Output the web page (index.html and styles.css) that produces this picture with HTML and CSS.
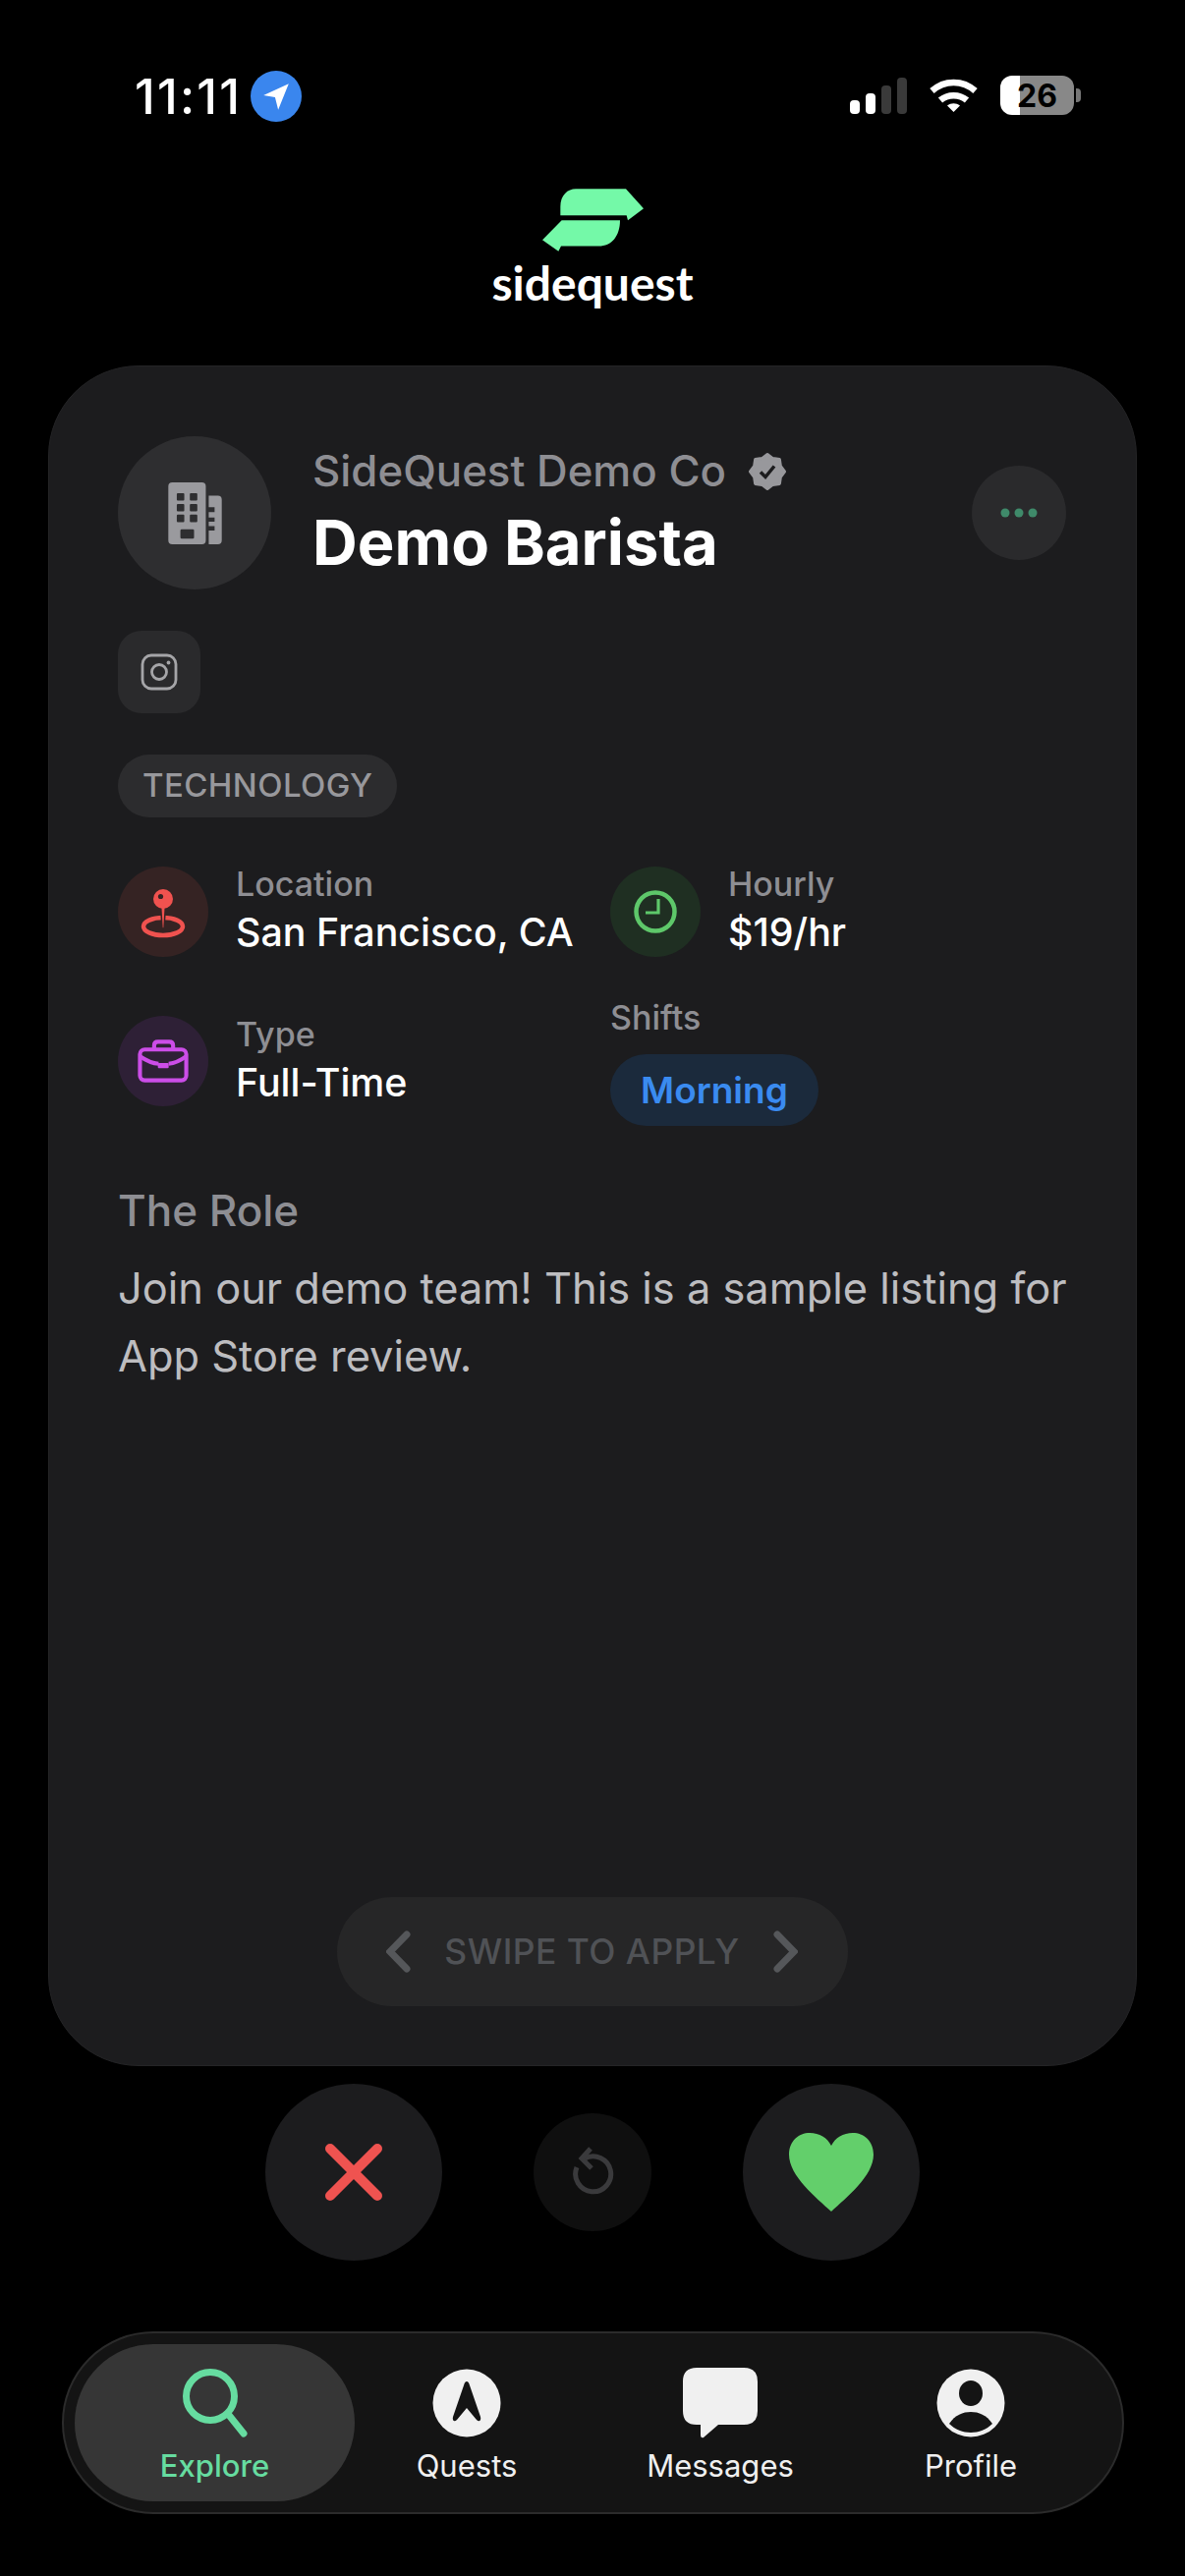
FILE: index.html
```html
<!DOCTYPE html>
<html>
<head>
  <meta charset="utf-8">
  <meta name="viewport" content="width=device-width, initial-scale=1">
  <title>SideQuest</title>
  <link rel="stylesheet" href="styles.css">
</head>
<body>
  <div class="status-bar">
    <div class="status-left">
      <span class="clock">11:11</span>
      <span class="location-dot">
        <svg width="32" height="32" viewBox="0 0 30 30"><path d="M27 3 L3 14 L14 16 L17 28 Z" fill="#fff"/></svg>
      </span>
    </div>
    <div class="status-right">
      <svg class="signal" width="58" height="37" viewBox="0 0 58 37">
        <rect x="0" y="23" width="10" height="14" rx="4" fill="#fff"/>
        <rect x="16" y="16" width="10" height="21" rx="4" fill="#fff"/>
        <rect x="32" y="8" width="10" height="29" rx="4" fill="#3a3a3a"/>
        <rect x="48" y="0" width="10" height="37" rx="4" fill="#3a3a3a"/>
      </svg>
      <svg class="wifi" width="49" height="37" viewBox="0 0 49 37" fill="none" stroke="#fff" stroke-width="6.5">
        <path d="M2.500 13.500 C15 2 34 2 46.500 13.500"/>
        <path d="M11 23 C18.500 16.500 30.500 16.500 38 23"/>
        <path d="M18 28.500 L24.500 35 L31 28.500 C27 25.500 22 25.500 18 28.500 Z" fill="#fff" stroke="none"/>
      </svg>
      <div class="battery"><span class="battery-level">26</span></div>
      <span class="battery-nub"></span>
    </div>
  </div>

  <div class="brand">
    <svg width="103" height="64" viewBox="213 66 309 191">
      <path d="M315 66 H468 L522 126 L474 162 L470 147 H268 V120 C268 85 290 66 315 66 Z" fill="#74f9a8"/>
      <path d="M272 162 H450 C450 210 425 241 385 241 H270 L262 257 L213 222 Z" fill="#74f9a8"/>
    </svg>
    <div class="brand-name">sidequest</div>
  </div>

  <div class="card">
    <div class="card-head">
      <div class="avatar">
        <svg width="55" height="63" viewBox="183 182 164 190">
          <rect x="183" y="182" width="115" height="190" rx="12" fill="#9a9a9e"/>
          <path d="M307 223 H335 Q347 223 347 235 V360 Q347 372 335 372 H307 V330 H325 V316 H307 V303 H325 V290 H307 V273 H325 V258 H307 Z" fill="#9a9a9e"/>
          <g fill="#2e2e30">
            <rect x="209" y="215" width="23" height="23" rx="3"/><rect x="249" y="215" width="23" height="23" rx="3"/>
            <rect x="209" y="248" width="23" height="23" rx="3"/><rect x="249" y="248" width="23" height="23" rx="3"/>
            <rect x="209" y="281" width="23" height="23" rx="3"/><rect x="249" y="281" width="23" height="23" rx="3"/>
            <rect x="220" y="326" width="42" height="29" rx="4"/>
          </g>
        </svg>
      </div>
      <div class="head-text">
        <div class="company">SideQuest Demo Co
          <svg class="verified" width="40" height="40" viewBox="0 0 40 40">
            <polygon points="20,2.500 25.500,6.600 32.400,7.600 33.400,14.500 37.500,20 33.400,25.500 32.400,32.400 25.500,33.400 20,37.500 14.500,33.400 7.600,32.400 6.600,25.500 2.500,20 6.600,14.500 7.600,7.600 14.500,6.600" fill="#98989c" stroke="#98989c" stroke-width="3" stroke-linejoin="round"/>
            <path d="M13 20.500 L18 25.500 L27 14.500" fill="none" stroke="#1c1c1e" stroke-width="3.500"/>
          </svg>
        </div>
        <div class="job-title">Demo Barista</div>
      </div>
      <div class="more">
        <svg width="40" height="10" viewBox="0 0 40 10" fill="#3f8a6a"><circle cx="6" cy="5" r="4.500"/><circle cx="20" cy="5" r="4.500"/><circle cx="34" cy="5" r="4.500"/></svg>
      </div>
    </div>

    <div class="social">
      <svg width="38" height="38" viewBox="0 0 38 38" fill="none" stroke="#a5a5a8" stroke-width="2.800">
        <rect x="2" y="2" width="34" height="34" rx="9"/>
        <circle cx="19" cy="19" r="7.500"/>
        <circle cx="28.500" cy="9.500" r="1.900" fill="#a5a5a8" stroke="none"/>
      </svg>
    </div>

    <div class="tag">TECHNOLOGY</div>

    <div class="info-grid">
      <div class="info">
        <div class="info-icon icon-red">
          <svg width="60" height="60" viewBox="0 0 60 60">
            <ellipse cx="30" cy="45" rx="20" ry="9" fill="none" stroke="#f0524f" stroke-width="4.500"/>
            <path d="M27.500 22 H32.500 L31 47 H29 Z" fill="#f0524f" stroke="#352323" stroke-width="1.500"/>
            <circle cx="30" cy="17" r="10" fill="#f0524f"/>
            <circle cx="27.500" cy="14.500" r="2.600" fill="#352323"/>
          </svg>
        </div>
        <div>
          <div class="info-label">Location</div>
          <div class="info-value">San Francisco, CA</div>
        </div>
      </div>
      <div class="info">
        <div class="info-icon icon-green">
          <svg width="46" height="46" viewBox="0 0 46 46" fill="none" stroke="#5ec86a">
            <circle cx="23" cy="23" r="19.500" stroke-width="4.500"/>
            <path d="M26 10 V24 H13" stroke-width="3.200"/>
          </svg>
        </div>
        <div>
          <div class="info-label">Hourly</div>
          <div class="info-value">$19/hr</div>
        </div>
      </div>
      <div class="info">
        <div class="info-icon icon-purple">
          <svg width="54" height="46" viewBox="85 568 157 132" fill="none" stroke="#cc4de8" stroke-width="12">
            <rect x="95" y="600" width="137" height="91" rx="14"/>
            <path d="M137 598 V588 Q137 577 148 577 H182 Q193 577 193 588 V598"/>
            <path d="M95 620 Q125 640 150 642 M180 642 Q205 640 232 620"/>
            <rect x="148" y="640" width="32" height="15" rx="3" fill="#cc4de8" stroke="none"/>
          </svg>
        </div>
        <div>
          <div class="info-label">Type</div>
          <div class="info-value">Full-Time</div>
        </div>
      </div>
      <div class="shifts">
        <div class="info-label">Shifts</div>
        <div class="shift-pill">Morning</div>
      </div>
    </div>

    <div class="role-title">The Role</div>
    <p class="role-text">Join our demo team! This is a sample listing for App Store review.</p>

    <div class="swipe-hint">
      <svg width="25" height="43" viewBox="0 0 25 43" fill="none" stroke="#55575a" stroke-width="7" stroke-linecap="round"><path d="M21 4 L4 21.500 L21 39"/></svg>
      <span class="swipe-text">SWIPE TO APPLY</span>
      <svg width="25" height="43" viewBox="0 0 25 43" fill="none" stroke="#55575a" stroke-width="7" stroke-linecap="round"><path d="M4 4 L21 21.500 L4 39"/></svg>
    </div>
  </div>

  <div class="actions">
    <div class="action action-big">
      <svg width="60" height="60" viewBox="0 0 60 60" stroke="#ef5350" stroke-width="10" stroke-linecap="round"><path d="M6 6 L54 54 M54 6 L6 54"/></svg>
    </div>
    <div class="action action-small">
      <svg width="44" height="54" viewBox="0 0 44 54" fill="none" stroke="#3a3a3c" stroke-width="5"><path d="M14 13 A18 18 0 1 1 6 22"/><path d="M20 3 L11 13 L21 23"/></svg>
    </div>
    <div class="action action-big">
      <svg width="86" height="80" viewBox="0 0 86 80"><path d="M43 80 C28 66 0 44 0 22 C0 8 10 0 21 0 C31 0 39 5 43 13 C47 5 55 0 65 0 C76 0 86 8 86 22 C86 44 58 66 43 80 Z" fill="#63cf6b"/></svg>
    </div>
  </div>

  <div class="tab-bar">
    <div class="tab tab-active">
      <svg class="tab-icon" width="68" height="72" viewBox="0 0 68 72" fill="none" stroke="#66dca0" stroke-width="7" stroke-linecap="round"><circle cx="29" cy="29" r="24.500"/><path d="M47 47 L63 67"/></svg>
      <span class="tab-label">Explore</span>
    </div>
    <div class="tab">
      <svg class="tab-icon" width="70" height="72" viewBox="0 0 70 72"><circle cx="35" cy="36" r="34.500" fill="#f0f0f0"/><path d="M35 14 C36.500 14 37 15 38 18 L49 50 C50 54 47.500 55.500 45 53 L35 41 L25 53 C22.500 55.500 20 54 21 50 L32 18 C33 15 33.500 14 35 14 Z" fill="#141414"/></svg>
      <span class="tab-label">Quests</span>
    </div>
    <div class="tab">
      <svg class="tab-icon" width="76" height="72" viewBox="0 0 76 72"><path d="M14 0 H62 Q76 0 76 14 V44 Q76 58 62 58 H36 L21 71 Q18 72 18 68 V58 H14 Q0 58 0 44 V14 Q0 0 14 0 Z" fill="#f0f0f0"/></svg>
      <span class="tab-label">Messages</span>
    </div>
    <div class="tab">
      <svg class="tab-icon" width="70" height="72" viewBox="0 0 70 72"><circle cx="35" cy="36" r="34.500" fill="#f0f0f0"/><ellipse cx="35" cy="26" rx="12" ry="13" fill="#141414"/><path d="M13 57 C19 48 27 45 35 45 C43 45 51 48 57 57 C51 63 43 66 35 66 C27 66 19 63 13 57 Z" fill="#141414"/></svg>
      <span class="tab-label">Profile</span>
    </div>
  </div>
</body>
</html>
```

FILE: styles.css
```css
* {
  box-sizing: border-box;
}
html, body {
  margin: 0;
  padding: 0;
  background: #000;
}
body {
  width: 1206px;
  height: 2622px;
  overflow: hidden;
  font-family: Inter, "Liberation Sans", sans-serif;
  color: #fff;
}

.status-bar {
  height: 192px;
  padding: 72px 106px 0 137px;
  display: flex;
  justify-content: space-between;
  align-items: flex-start;
}
.status-left {
  display: flex;
  align-items: center;
  gap: 9px;
  height: 52px;
}
.clock {
  font-size: 50px;
  font-weight: 500;
  letter-spacing: 2.2px;
}
.location-dot {
  width: 52px;
  height: 52px;
  border-radius: 50%;
  background: #3a86ee;
  display: flex;
  align-items: center;
  justify-content: center;
}
.status-right {
  display: flex;
  align-items: center;
  height: 50px;
}
.wifi {
  margin-left: 23px;
}
.battery {
  margin-left: 23px;
  width: 75px;
  height: 40px;
  border-radius: 12px;
  background: linear-gradient(90deg, #fff 27%, #888 27%);
  display: flex;
  align-items: center;
  justify-content: center;
}
.battery-level {
  color: #000;
  font-size: 32px;
  font-weight: 700;
}
.battery-nub {
  width: 5px;
  height: 14px;
  margin-left: 2px;
  border-radius: 0 4px 4px 0;
  background: #777;
}

.brand {
  height: 180px;
  display: flex;
  flex-direction: column;
  align-items: center;
}
.brand-name {
  font-family: Lato, Inter, sans-serif;
  font-size: 48px;
  font-weight: 700;
  line-height: 56px;
  margin-top: 4px;
}

.card {
  width: 1108px;
  height: 1731px;
  margin-left: 49px;
  padding: 71px 71px 60px 70px;
  background: #1c1c1e;
  border: 1px solid #242426;
  border-radius: 92px;
  display: flex;
  flex-direction: column;
}
.card-head {
  display: flex;
  align-items: center;
}
.avatar {
  width: 156px;
  height: 156px;
  flex: none;
  border-radius: 50%;
  background: #2e2e30;
  display: flex;
  align-items: center;
  justify-content: center;
}
.head-text {
  flex: 1;
  margin-left: 42px;
}
.company {
  display: flex;
  align-items: center;
  gap: 22px;
  font-size: 43.8px;
  font-weight: 500;
  line-height: 60px;
  margin-top: -6px;
  color: #8e8e93;
}
.job-title {
  font-size: 63.3px;
  font-weight: 700;
  line-height: 78px;
  margin: 3px 0 -3px;
}
.more {
  width: 96px;
  height: 96px;
  border-radius: 50%;
  background: #2a2a2c;
  display: flex;
  align-items: center;
  justify-content: center;
}
.social {
  width: 84px;
  height: 84px;
  margin-top: 42px;
  border-radius: 24px;
  background: #2a2a2c;
  display: flex;
  align-items: center;
  justify-content: center;
}
.tag {
  align-self: flex-start;
  height: 64px;
  margin-top: 42px;
  padding: 0 25px;
  border-radius: 32px;
  background: #2c2c2e;
  color: #98989c;
  font-size: 33px;
  font-weight: 500;
  letter-spacing: .4px;
  line-height: 62px;
}

.info-grid {
  margin-top: 46px;
  display: grid;
  grid-template-columns: 501px 1fr;
  row-gap: 37px;
  align-items: center;
}
.info {
  display: flex;
  align-items: center;
  gap: 28px;
}
.info-icon {
  width: 92px;
  height: 92px;
  flex: none;
  border-radius: 50%;
  display: flex;
  align-items: center;
  justify-content: center;
}
.icon-red { background: #352323; }
.icon-green { background: #1f2f22; }
.icon-purple { background: #2e2036; }
.info-label {
  font-size: 34px;
  font-weight: 500;
  line-height: 43px;
  color: #8e8e93;
}
.info-value {
  font-size: 39.4px;
  font-weight: 500;
  line-height: 56px;
  color: #fff;
}
.shifts {
  display: flex;
  flex-direction: column;
  align-items: flex-start;
  gap: 16px;
}
.shift-pill {
  height: 73px;
  padding: 0 31px;
  border-radius: 37px;
  background: #1b2a3c;
  color: #3a8bf0;
  font-size: 37px;
  font-weight: 600;
  line-height: 73px;
}

.role-title {
  margin-top: 60px;
  font-size: 44px;
  font-weight: 500;
  line-height: 52px;
  color: #8e8e93;
}
.role-text {
  margin: 19px -14px 0 0;
  font-size: 43.4px;
  line-height: 69px;
  color: #bdbdc0;
}
.swipe-hint {
  align-self: center;
  margin-top: auto;
  width: 520px;
  height: 111px;
  border-radius: 56px;
  background: #262627;
  display: flex;
  align-items: center;
  justify-content: center;
  gap: 34px;
}
.swipe-text {
  font-size: 35.4px;
  font-weight: 500;
  color: #505256;
  letter-spacing: .5px;
}

.actions {
  margin-top: 18px;
  display: flex;
  justify-content: center;
  align-items: center;
  gap: 93px;
}
.action {
  border-radius: 50%;
  display: flex;
  align-items: center;
  justify-content: center;
}
.action-big {
  width: 180px;
  height: 180px;
  background: #1c1c1e;
}
.action-small {
  width: 120px;
  height: 120px;
  background: #0f0f0f;
}

.tab-bar {
  width: 1081px;
  height: 186px;
  margin: 72px 0 0 63px;
  padding: 11px;
  border: 2px solid #2b2b2b;
  border-radius: 93px;
  background: #141414;
  display: grid;
  grid-template-columns: 285px 228px 288px 222px;
}
.tab {
  padding-top: 24px;
  display: flex;
  flex-direction: column;
  align-items: center;
}
.tab-active {
  border-radius: 81px;
  background: #363636;
}
.tab-icon {
  flex: none;
}
.tab-label {
  margin-top: 8px;
  font-size: 31px;
  font-weight: 400;
  line-height: 40px;
  color: #f0f0f0;
}
.tab-active .tab-label {
  font-weight: 500;
  color: #66dca0;
}
```
